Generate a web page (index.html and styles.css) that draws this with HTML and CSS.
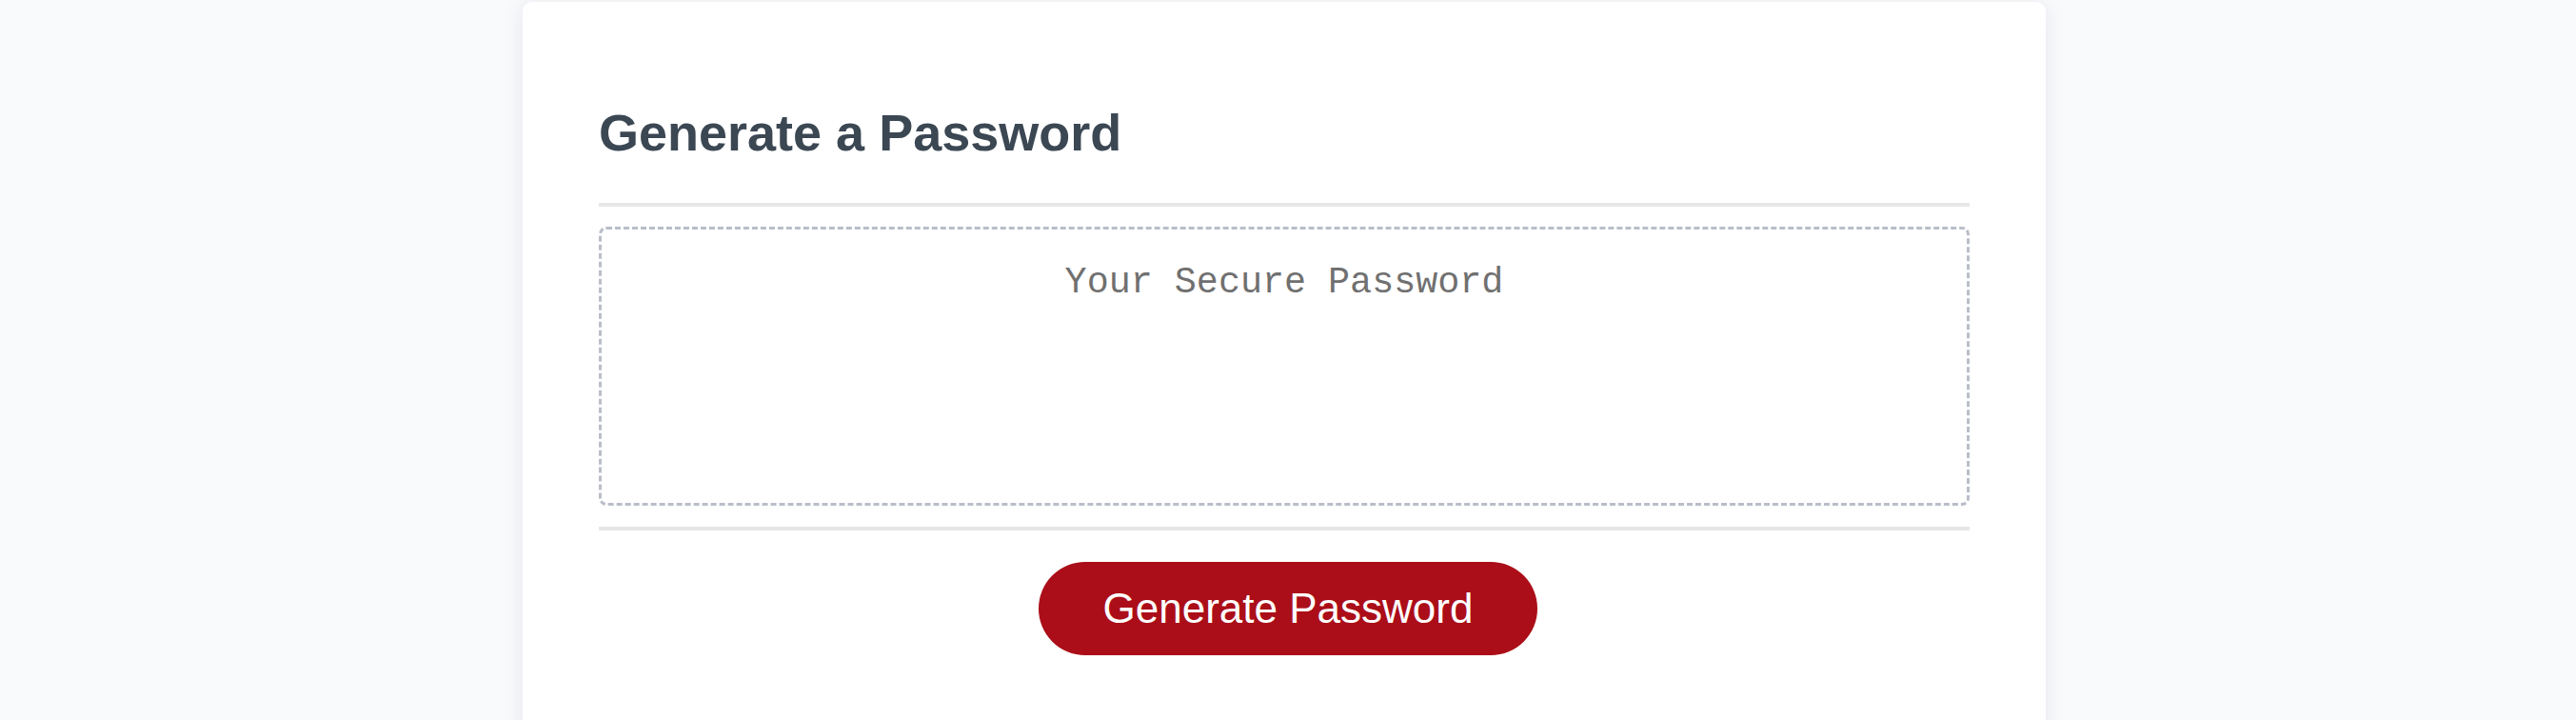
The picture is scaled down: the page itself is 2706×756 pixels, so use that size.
FILE: index.html
```html
<!DOCTYPE html>
<html lang="en">
<head>
<meta charset="utf-8">
<title>Password Generator</title>
<link rel="stylesheet" href="styles.css">
</head>
<body>
<div class="page">
  <div class="card">
    <div class="card-header">
      <h2 class="card-title">Generate a Password</h2>
    </div>
    <div class="card-body">
      <textarea class="password-box" readonly placeholder="Your Secure Password" aria-label="Generated Password"></textarea>
    </div>
    <div class="card-footer">
      <button class="btn" type="button">Generate Password</button>
    </div>
  </div>
</div>
</body>
</html>
```

FILE: styles.css
```css
* {
  box-sizing: border-box;
}

html,
body {
  margin: 0;
  padding: 0;
  height: 100%;
}

body {
  background: #f9fafc;
  font-family: "Liberation Sans", Arial, sans-serif;
  overflow: hidden;
}

.page {
  display: flex;
  justify-content: center;
  padding: 2px 8px 0 0;
}

.card {
  width: 1600px;
  min-height: 800px;
  background: #ffffff;
  border-radius: 10px;
  box-shadow: 0 2px 22px rgba(20, 30, 60, 0.09);
  padding: 0 80px;
}

.card-header {
  padding: 106px 0 43px;
  border-bottom: 4px solid #e7e7e8;
}

.card-title {
  margin: 0;
  font-size: 54px;
  font-weight: 700;
  line-height: normal;
  color: #3b4753;
}

.card-body {
  padding: 21px 0 22px;
  border-bottom: 4px solid #e7e7e8;
}

.password-box {
  display: block;
  width: 100%;
  height: 293px;
  padding: 34px 20px;
  border: 3px dashed #b9bec8;
  border-radius: 8px;
  font-family: "Liberation Mono", "Courier New", monospace;
  font-size: 38.4px;
  line-height: normal;
  text-align: center;
  color: #333;
  background: #fff;
  resize: none;
  outline: none;
}

.password-box::placeholder {
  color: #707070;
}

.card-footer {
  display: flex;
  justify-content: center;
  padding-top: 33px;
}

.btn {
  width: 524px;
  height: 98px;
  margin-left: 8px;
  padding: 0;
  border: none;
  border-radius: 49px;
  background: #ab0e18;
  color: #ffffff;
  font-family: "Liberation Sans", Arial, sans-serif;
  font-size: 44px;
  line-height: normal;
  cursor: pointer;
}
```
